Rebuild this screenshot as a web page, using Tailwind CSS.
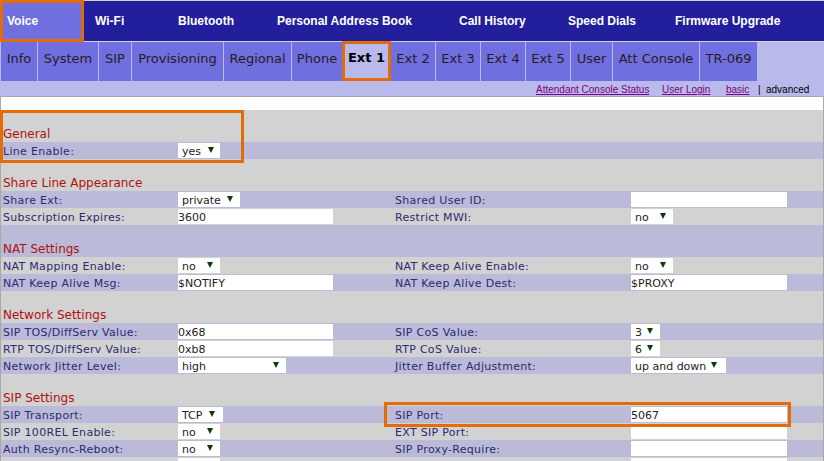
<!DOCTYPE html>
<html lang="en">
<head>
    <meta charset="UTF-8">
    <meta name="viewport" content="width=device-width, initial-scale=1.0">
    <title>Ext 1</title>
    <script src="https://cdn.jsdelivr.net/npm/@tailwindcss/browser@4"></script>
</head>
<body class="relative h-[461px] w-[824px] overflow-hidden bg-[#d2d2d2] font-['DejaVu_Sans',sans-serif] text-[11px] text-[#2a2a70]">

    <!-- top nav -->
    <nav class="mt-px flex h-[40px] items-center bg-[#231f9c] font-['Liberation_Sans',sans-serif] text-[12px] font-bold text-white">
        <a class="flex h-full w-[84px] items-center bg-[#6f6fe0] pl-[7px]">Voice</a>
        <a class="w-[94px] pl-[11px]">Wi-Fi</a>
        <a class="w-[99px]">Bluetooth</a>
        <a class="w-[182px]">Personal Address Book</a>
        <a class="w-[109px]">Call History</a>
        <a class="w-[107px]">Speed Dials</a>
        <a>Firmware Upgrade</a>
    </nav>

    <!-- sub tabs -->
    <div class="mt-px flex h-[39px] gap-px bg-[#b9b9ec] pl-px text-[13px] text-[#2a1a20]">
        <a class="flex w-[36px] justify-center bg-[#6f6fe0] pt-[7px]">Info</a>
        <a class="flex w-[60px] justify-center bg-[#6f6fe0] pt-[7px]">System</a>
        <a class="flex w-[32px] justify-center bg-[#6f6fe0] pt-[7px]">SIP</a>
        <a class="flex w-[91px] justify-center bg-[#6f6fe0] pt-[7px]">Provisioning</a>
        <a class="flex w-[67px] justify-center bg-[#6f6fe0] pt-[7px]">Regional</a>
        <a class="flex w-[50px] justify-center bg-[#6f6fe0] pt-[7px]">Phone</a>
        <a class="-ml-px flex w-[49px] justify-center pt-[6px] font-bold text-black">Ext 1</a>
        <a class="-ml-px flex w-[44px] justify-center bg-[#6f6fe0] pt-[7px]">Ext 2</a>
        <a class="flex w-[44px] justify-center bg-[#6f6fe0] pt-[7px]">Ext 3</a>
        <a class="flex w-[44px] justify-center bg-[#6f6fe0] pt-[7px]">Ext 4</a>
        <a class="flex w-[44px] justify-center bg-[#6f6fe0] pt-[7px]">Ext 5</a>
        <a class="flex w-[41px] justify-center bg-[#6f6fe0] pt-[7px]">User</a>
        <a class="flex w-[86px] justify-center bg-[#6f6fe0] pt-[7px]">Att Console</a>
        <a class="flex w-[57px] justify-center bg-[#6f6fe0] pt-[7px]">TR-069</a>
    </div>

    <!-- links strip -->
    <div class="flex h-[16px] items-center border-b border-[#a8a8a8] bg-[#b9b9ec] pl-[536px] pt-[2px] font-['Liberation_Sans',sans-serif] text-[10px] text-black">
        <a class="w-[126px] text-[#800080] underline">Attendant Console Status</a>
        <a class="w-[64px] text-[#800080] underline">User Login</a>
        <a class="w-[32px] text-[#800080] underline">basic</a>
        <span class="w-[8px]">|</span>
        <span>advanced</span>
    </div>
    <div class="h-[13px] border-x border-[#a8a8a8] bg-white"></div>

    <!-- form -->
    <main class="border-x border-[#a8a8a8] pl-[2px]">
        <h2 class="flex h-[32px] items-end text-[12px] leading-[16px] text-[#b01010]">General</h2>
        <div class="-ml-[2px] grid h-[17px] grid-cols-[175px_217px_236px_1fr] grid-rows-[17px] items-center bg-[#bbbbd9] pl-[2px] tracking-[0.3px] [&>span]:pt-[4px]">
            <span>Line Enable:</span>
            <div class="flex h-[15px] w-[42px] items-start bg-white pl-[4px] leading-[17px] tracking-normal text-[#222]">yes<svg class="ml-[7px] mt-[4px]" width="6" height="6" viewBox="0 0 6 6"><path d="M0 0h6L3 6z" fill="#0e3b0e"/></svg></div>
        </div>

        <h2 class="flex h-[32px] items-end text-[12px] leading-[16px] text-[#b01010]">Share Line Appearance</h2>
        <div class="-ml-[2px] grid h-[17px] grid-cols-[175px_217px_236px_1fr] grid-rows-[17px] items-center bg-[#bbbbd9] pl-[2px] tracking-[0.3px] [&>span]:pt-[4px]">
            <span>Share Ext:</span>
            <div class="flex h-[15px] w-[62px] items-start bg-white pl-[4px] leading-[17px] tracking-normal text-[#222]">private<svg class="ml-[6px] mt-[4px]" width="6" height="6" viewBox="0 0 6 6"><path d="M0 0h6L3 6z" fill="#0e3b0e"/></svg></div>
            <span>Shared User ID:</span>
            <div class="h-[15px] w-[156px] bg-white"></div>
        </div>
        <div class="-ml-[2px] grid h-[17px] grid-cols-[175px_217px_236px_1fr] grid-rows-[17px] items-center pl-[2px] tracking-[0.3px] [&>span]:pt-[4px]">
            <span>Subscription Expires:</span>
            <div class="h-[15px] w-[155px] bg-white leading-[17px] tracking-normal text-[#222]">3600</div>
            <span>Restrict MWI:</span>
            <div class="flex h-[15px] w-[42px] items-start bg-white pl-[4px] leading-[17px] tracking-normal text-[#222]">no<svg class="ml-[11px] mt-[4px]" width="6" height="6" viewBox="0 0 6 6"><path d="M0 0h6L3 6z" fill="#0e3b0e"/></svg></div>
        </div>

        <h2 class="-ml-[2px] flex h-[32px] items-end bg-[#bbbbd9] pl-[2px] text-[12px] leading-[16px] text-[#b01010]">NAT Settings</h2>
        <div class="-ml-[2px] grid h-[17px] grid-cols-[175px_217px_236px_1fr] grid-rows-[17px] items-center pl-[2px] tracking-[0.3px] [&>span]:pt-[4px]">
            <span>NAT Mapping Enable:</span>
            <div class="flex h-[15px] w-[42px] items-start bg-white pl-[4px] leading-[17px] tracking-normal text-[#222]">no<svg class="ml-[11px] mt-[4px]" width="6" height="6" viewBox="0 0 6 6"><path d="M0 0h6L3 6z" fill="#0e3b0e"/></svg></div>
            <span>NAT Keep Alive Enable:</span>
            <div class="flex h-[15px] w-[42px] items-start bg-white pl-[4px] leading-[17px] tracking-normal text-[#222]">no<svg class="ml-[11px] mt-[4px]" width="6" height="6" viewBox="0 0 6 6"><path d="M0 0h6L3 6z" fill="#0e3b0e"/></svg></div>
        </div>
        <div class="-ml-[2px] grid h-[17px] grid-cols-[175px_217px_236px_1fr] grid-rows-[17px] items-center bg-[#bbbbd9] pl-[2px] tracking-[0.3px] [&>span]:pt-[4px]">
            <span>NAT Keep Alive Msg:</span>
            <div class="h-[15px] w-[155px] bg-white leading-[17px] tracking-normal text-[#222]">$NOTIFY</div>
            <span>NAT Keep Alive Dest:</span>
            <div class="h-[15px] w-[156px] bg-white leading-[17px] tracking-normal text-[#222]">$PROXY</div>
        </div>

        <h2 class="flex h-[32px] items-end text-[12px] leading-[16px] text-[#b01010]">Network Settings</h2>
        <div class="-ml-[2px] grid h-[17px] grid-cols-[175px_217px_236px_1fr] grid-rows-[17px] items-center bg-[#bbbbd9] pl-[2px] tracking-[0.3px] [&>span]:pt-[4px]">
            <span>SIP TOS/DiffServ Value:</span>
            <div class="h-[15px] w-[155px] bg-white leading-[17px] tracking-normal text-[#222]">0x68</div>
            <span>SIP CoS Value:</span>
            <div class="flex h-[15px] w-[29px] items-start bg-white pl-[4px] leading-[17px] tracking-normal text-[#222]">3<svg class="ml-[5px] mt-[4px]" width="6" height="6" viewBox="0 0 6 6"><path d="M0 0h6L3 6z" fill="#0e3b0e"/></svg></div>
        </div>
        <div class="-ml-[2px] grid h-[17px] grid-cols-[175px_217px_236px_1fr] grid-rows-[17px] items-center pl-[2px] tracking-[0.3px] [&>span]:pt-[4px]">
            <span>RTP TOS/DiffServ Value:</span>
            <div class="h-[15px] w-[155px] bg-white leading-[17px] tracking-normal text-[#222]">0xb8</div>
            <span>RTP CoS Value:</span>
            <div class="flex h-[15px] w-[29px] items-start bg-white pl-[4px] leading-[17px] tracking-normal text-[#222]">6<svg class="ml-[5px] mt-[4px]" width="6" height="6" viewBox="0 0 6 6"><path d="M0 0h6L3 6z" fill="#0e3b0e"/></svg></div>
        </div>
        <div class="-ml-[2px] grid h-[17px] grid-cols-[175px_217px_236px_1fr] grid-rows-[17px] items-center bg-[#bbbbd9] pl-[2px] tracking-[0.3px] [&>span]:pt-[4px]">
            <span>Network Jitter Level:</span>
            <div class="flex h-[15px] w-[108px] items-start justify-between bg-white pl-[4px] pr-[7px] leading-[17px] tracking-normal text-[#222]">high<svg class="mt-[4px]" width="6" height="6" viewBox="0 0 6 6"><path d="M0 0h6L3 6z" fill="#0e3b0e"/></svg></div>
            <span>Jitter Buffer Adjustment:</span>
            <div class="flex h-[15px] w-[95px] items-start bg-white pl-[4px] leading-[17px] tracking-normal text-[#222]">up and down<svg class="ml-[5px] mt-[4px]" width="6" height="6" viewBox="0 0 6 6"><path d="M0 0h6L3 6z" fill="#0e3b0e"/></svg></div>
        </div>

        <h2 class="flex h-[32px] items-end text-[12px] leading-[16px] text-[#b01010]">SIP Settings</h2>
        <div class="-ml-[2px] grid h-[17px] grid-cols-[175px_217px_236px_1fr] grid-rows-[17px] items-center bg-[#bbbbd9] pl-[2px] tracking-[0.3px] [&>span]:pt-[4px]">
            <span>SIP Transport:</span>
            <div class="flex h-[15px] w-[45px] items-start bg-white pl-[4px] leading-[17px] tracking-normal text-[#222]">TCP<svg class="ml-[7px] mt-[4px]" width="6" height="6" viewBox="0 0 6 6"><path d="M0 0h6L3 6z" fill="#0e3b0e"/></svg></div>
            <span>SIP Port:</span>
            <div class="h-[15px] w-[156px] bg-white leading-[17px] tracking-normal text-[#222]">5067</div>
        </div>
        <div class="-ml-[2px] grid h-[17px] grid-cols-[175px_217px_236px_1fr] grid-rows-[17px] items-center pl-[2px] tracking-[0.3px] [&>span]:pt-[4px]">
            <span>SIP 100REL Enable:</span>
            <div class="flex h-[15px] w-[42px] items-start bg-white pl-[4px] leading-[17px] tracking-normal text-[#222]">no<svg class="ml-[11px] mt-[4px]" width="6" height="6" viewBox="0 0 6 6"><path d="M0 0h6L3 6z" fill="#0e3b0e"/></svg></div>
            <span>EXT SIP Port:</span>
            <div class="h-[15px] w-[156px] bg-white"></div>
        </div>
        <div class="-ml-[2px] grid h-[17px] grid-cols-[175px_217px_236px_1fr] grid-rows-[17px] items-center bg-[#bbbbd9] pl-[2px] tracking-[0.3px] [&>span]:pt-[4px]">
            <span>Auth Resync-Reboot:</span>
            <div class="flex h-[15px] w-[42px] items-start bg-white pl-[4px] leading-[17px] tracking-normal text-[#222]">no<svg class="ml-[11px] mt-[4px]" width="6" height="6" viewBox="0 0 6 6"><path d="M0 0h6L3 6z" fill="#0e3b0e"/></svg></div>
            <span>SIP Proxy-Require:</span>
            <div class="h-[15px] w-[156px] bg-white"></div>
        </div>
        <div class="-ml-[2px] grid h-[17px] grid-cols-[175px_217px_236px_1fr] grid-rows-[17px] items-center pl-[2px]">
            <span></span>
            <div class="h-[15px] w-[42px] bg-white"></div>
            <span></span>
            <div class="h-[15px] w-[156px] bg-white"></div>
        </div>
    </main>

    <!-- orange callouts -->
    <div class="absolute left-0 top-0 h-[42px] w-[84px] border-[3px] border-[#e36c09]"></div>
    <div class="absolute left-[342px] top-[41px] h-[40px] w-[49px] border-[3px] border-[#e36c09]"></div>
    <div class="absolute left-0 top-[110px] h-[53px] w-[244px] border-[3px] border-[#e36c09]"></div>
    <div class="absolute left-[384px] top-[402px] h-[25px] w-[407px] border-[3px] border-[#e36c09]"></div>
</body>
</html>
